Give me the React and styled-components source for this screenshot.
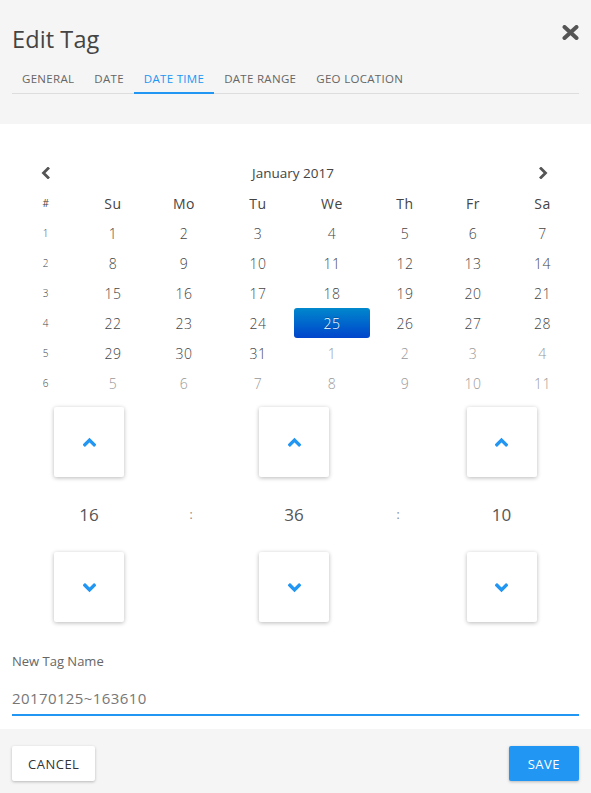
import React from "react";
import styled, { createGlobalStyle } from "styled-components";

const Global = createGlobalStyle`
  html, body { margin: 0; padding: 0; background: #fff; }
  body { font-family: "Open Sans", "Noto Sans", sans-serif; color: #555; }
  * { box-sizing: border-box; }
`;

const Dialog = styled.div`
  width: 591px;
  height: 793px;
  display: flex;
  flex-direction: column;
  background: #fff;
`;

const Header = styled.div`
  background: #f5f5f5;
  padding: 0 12px;
  height: 124px;
  position: relative;
`;

const Title = styled.h1`
  margin: 0;
  padding-top: 23px;
  font-size: 23.5px;
  font-weight: 400;
  color: #444;
  line-height: 32px;
  letter-spacing: 0.1px;
`;

const Close = styled.button`
  position: absolute;
  right: 12px;
  top: 23px;
  width: 18px;
  height: 18px;
  padding: 0;
  border: 0;
  background: none;
  display: flex;
  align-items: center;
  justify-content: center;
`;

const Tabs = styled.div`
  display: flex;
  margin-top: 10px;
  border-bottom: 1px solid #ddd;
`;

const Tab = styled.div`
  padding: 0 10px;
  height: 29px;
  line-height: 28px;
  font-size: 11.5px;
  letter-spacing: 0.3px;
  text-transform: uppercase;
  color: ${(p) => (p.$active ? "#2196f3" : "#666")};
  border-bottom: 2px solid ${(p) => (p.$active ? "#2196f3" : "transparent")};
  margin-bottom: -1px;
`;

const Body = styled.div`
  flex: 1;
  padding: 34px 12px 0;
`;

const Cal = styled.div`
  display: grid;
  grid-template-columns: 68px 66px 76px 72px 76px 70px 66px 73px;
  grid-auto-rows: 30px;
`;

const Cell = styled.div`
  display: flex;
  align-items: center;
  justify-content: center;
  font-size: ${(p) => (p.$small ? "10px" : "14px")};
  font-weight: ${(p) => (p.$head ? 400 : 300)};
  color: ${(p) => (p.$muted ? "#999" : "#444")};
  letter-spacing: 0.6px;
  ${(p) => p.$span && `grid-column: span ${p.$span};`}
  ${(p) =>
    p.$active &&
    `
    background: linear-gradient(to bottom, #0088cc, #0044cc);
    color: #fff;
    border-radius: 3px;
    text-shadow: 0 -1px 0 rgba(0,0,0,0.25);
  `}
`;

const MonthTitle = styled(Cell)`
  font-size: 13.5px;
  letter-spacing: 0;
`;

const Time = styled.div`
  display: grid;
  grid-template-columns: 154px 50px 156px 52px 155px;
  grid-template-rows: 70px 75px 70px;
  margin-top: 9px;
`;

const Spin = styled.button`
  justify-self: center;
  width: 70px;
  height: 70px;
  border: 0;
  background: #fff;
  border-radius: 2px;
  box-shadow: 0 1px 4px rgba(0, 0, 0, 0.28);
  display: flex;
  align-items: center;
  justify-content: center;
  padding: 0;
`;

const TimeVal = styled.div`
  display: flex;
  align-items: center;
  justify-content: center;
  font-size: 17px;
  color: #555;
`;

const Sep = styled(TimeVal)`
  font-size: 12px;
  color: #888;
`;

const Field = styled.div`
  margin-top: 29px;
`;

const Label = styled.div`
  font-size: 13px;
  color: #666;
  line-height: 20px;
`;

const Input = styled.div`
  margin-top: 17px;
  font-size: 15px;
  color: #777;
  letter-spacing: 0.4px;
  padding-bottom: 6px;
  border-bottom: 2px solid #2196f3;
  line-height: 20px;
`;

const Footer = styled.div`
  height: 64px;
  background: #f5f5f5;
  padding: 17px 12px 0;
  display: flex;
  justify-content: space-between;
  align-items: flex-start;
`;

const Btn = styled.button`
  height: 35px;
  padding: 0 ${(p) => (p.$primary ? "19px" : "16px")};
  border: 0;
  border-radius: 2px;
  font-family: inherit;
  font-size: 13px;
  letter-spacing: 0.5px;
  text-transform: uppercase;
  background: ${(p) => (p.$primary ? "#2196f3" : "#fff")};
  color: ${(p) => (p.$primary ? "#fff" : "#333")};
  box-shadow: 0 1px 3px rgba(0, 0, 0, 0.25);
`;

const Chevron = ({ dir = "up", color = "#2196f3", size = 10, w = 2.6 }) => {
  const paths = {
    up: "M1.8 8 L6 3.8 L10.2 8",
    down: "M1.8 4 L6 8.2 L10.2 4",
    left: "M8 1.5 L3.5 6 L8 10.5",
    right: "M4 1.5 L8.5 6 L4 10.5",
  };
  return (
    <svg width={size} height={size} viewBox="0 0 12 12">
      <path d={paths[dir]} fill="none" stroke={color} strokeWidth={w} strokeLinecap="square" />
    </svg>
  );
};

const days = ["Su", "Mo", "Tu", "We", "Th", "Fr", "Sa"];
const weeks = [
  [1, 2, 3, 4, 5, 6, 7],
  [8, 9, 10, 11, 12, 13, 14],
  [15, 16, 17, 18, 19, 20, 21],
  [22, 23, 24, 25, 26, 27, 28],
  [29, 30, 31, 1, 2, 3, 4],
  [5, 6, 7, 8, 9, 10, 11],
];

export default function App() {
  return (
    <Dialog>
      <Global />
      <Header>
        <Title>Edit Tag</Title>
        <Close aria-label="close">
          <svg width="17" height="15" viewBox="0 0 17 15">
            <path d="M2.5 2 L14.5 13 M14.5 2 L2.5 13" stroke="#555" strokeWidth="4" strokeLinecap="round" />
          </svg>
        </Close>
        <Tabs>
          {["General", "Date", "Date Time", "Date Range", "Geo Location"].map((t) => (
            <Tab key={t} $active={t === "Date Time"}>
              {t}
            </Tab>
          ))}
        </Tabs>
      </Header>
      <Body>
        <Cal>
          <Cell>
            <Chevron dir="left" color="#555" size={12} w={2.8} />
          </Cell>
          <MonthTitle $head $span={6}>January 2017</MonthTitle>
          <Cell>
            <Chevron dir="right" color="#555" size={12} w={2.8} />
          </Cell>
          <Cell $small $head>#</Cell>
          {days.map((d) => (
            <Cell key={d} $head>{d}</Cell>
          ))}
          {weeks.map((w, wi) => (
            <React.Fragment key={wi}>
              <Cell $small>{wi + 1}</Cell>
              {w.map((d, di) => {
                const muted = (wi === 4 && di > 2) || wi === 5;
                return (
                  <Cell key={di} $muted={muted} $active={wi === 3 && di === 3}>
                    {d}
                  </Cell>
                );
              })}
            </React.Fragment>
          ))}
        </Cal>
        <Time>
          <Spin><Chevron dir="up" size={13} w={3.2} /></Spin>
          <div />
          <Spin><Chevron dir="up" size={13} w={3.2} /></Spin>
          <div />
          <Spin><Chevron dir="up" size={13} w={3.2} /></Spin>
          <TimeVal>16</TimeVal>
          <Sep>:</Sep>
          <TimeVal>36</TimeVal>
          <Sep>:</Sep>
          <TimeVal>10</TimeVal>
          <Spin><Chevron dir="down" size={13} w={3.2} /></Spin>
          <div />
          <Spin><Chevron dir="down" size={13} w={3.2} /></Spin>
          <div />
          <Spin><Chevron dir="down" size={13} w={3.2} /></Spin>
        </Time>
        <Field>
          <Label>New Tag Name</Label>
          <Input>20170125~163610</Input>
        </Field>
      </Body>
      <Footer>
        <Btn>Cancel</Btn>
        <Btn $primary>Save</Btn>
      </Footer>
    </Dialog>
  );
}
